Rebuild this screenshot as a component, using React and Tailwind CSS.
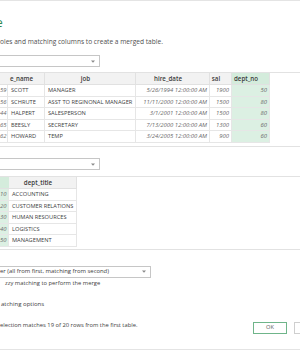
import React from 'react';

const employees = [
  ['59', 'SCOTT', 'MANAGER', '5/26/1994 12:00:00 AM', '1900', '50'],
  ['56', 'SCHRUTE', 'ASST TO REGINONAL MANAGER', '11/11/2000 12:00:00 AM', '1500', '80'],
  ['44', 'HALPERT', 'SALESPERSON', '3/1/2001 12:00:00 AM', '1500', '80'],
  ['65', 'BEESLY', 'SECRETARY', '7/13/2000 12:00:00 AM', '1300', '60'],
  ['62', 'HOWARD', 'TEMP', '3/24/2005 12:00:00 AM', '900', '60'],
];

const departments = [
  ['10', 'ACCOUNTING'],
  ['20', 'CUSTOMER RELATIONS'],
  ['30', 'HUMAN RESOURCES'],
  ['40', 'LOGISTICS'],
  ['50', 'MANAGEMENT'],
];

const Caret = () => (
  <svg width="4" height="3" viewBox="0 0 4 3" className="shrink-0 mr-[4px]">
    <path d="M0 0.5 L4 0.5 L2 2.8 Z" fill="#8a8a8a" />
  </svg>
);

const head = 'h-[12px] leading-[12px] border-r border-b border-[#e1e1e1] text-center pr-[9px] text-[6.2px] font-semibold text-[#3c3c3c] whitespace-nowrap overflow-hidden';
const cell = 'h-[11.5px] leading-[11.5px] border-r border-b border-[#e6e6e6] whitespace-nowrap overflow-hidden';
const txt = `${cell} pl-[3px] text-[5.7px] text-[#404040]`;
const num = `${cell} pr-[2px] text-right italic text-[5.9px] text-[#6a6a6a]`;

const App = () => {
  return (
    <div className="w-[300px] h-[350px] bg-white overflow-hidden font-['Open_Sans',sans-serif] flex flex-col">
      <div className="h-px bg-[#e4e4e4] shrink-0" />

      {/* title + description */}
      <div className="mt-[15px] h-[14px] leading-[14px] text-[12px] text-[#2f8a52] -ml-[4px] shrink-0">e</div>
      <div className="mt-[7px] h-[10px] leading-[10px] text-[6.6px] text-[#505050] whitespace-nowrap shrink-0">
        oles and matching columns to create a merged table.
      </div>

      <div className="mt-[8px] w-[100px] h-[12px] border border-l-0 border-[#c6c6c6] flex items-center justify-end shrink-0">
        <Caret />
      </div>

      {/* first table */}
      <div className="mt-[5px] border-y border-[#e2e2e2] pb-[3.5px] shrink-0">
        <div className="grid grid-cols-[8px_37px_91px_74px_22px_38px] w-[270px]">
          <div className={`${head} bg-[#f2f2f2]`} />
          <div className={`${head} bg-[#f2f2f2]`}>e_name</div>
          <div className={`${head} bg-[#f2f2f2]`}>job</div>
          <div className={`${head} bg-[#f2f2f2]`}>hire_date</div>
          <div className={`${head} bg-[#f2f2f2]`}>sal</div>
          <div className={`${head} bg-[#d4ecdc]`}>dept_no</div>
          {employees.map((r) => (
            <React.Fragment key={r[0]}>
              <div className={num}>{r[0]}</div>
              <div className={txt}>{r[1]}</div>
              <div className={txt}>{r[2]}</div>
              <div className={num}>{r[3]}</div>
              <div className={num}>{r[4]}</div>
              <div className={`${num} bg-[#dcf0e3]`}>{r[5]}</div>
            </React.Fragment>
          ))}
        </div>
      </div>

      <div className="mt-[11px] w-[100px] h-[12px] border border-l-0 border-[#c6c6c6] flex items-center justify-end shrink-0">
        <Caret />
      </div>

      {/* second table */}
      <div className="mt-[6px] border-y border-[#e2e2e2] pb-[2px] shrink-0">
        <div className="grid grid-cols-[9px_68px] w-[77px]">
          <div className={`${head} h-[11.5px] leading-[11.5px] bg-[#d4ecdc]`} />
          <div className={`${head} h-[11.5px] leading-[11.5px] bg-[#f2f2f2]`}>dept_title</div>
          {departments.map((r) => (
            <React.Fragment key={r[0]}>
              <div className={`${num} bg-[#dcf0e3]`}>{r[0]}</div>
              <div className={txt}>{r[1]}</div>
            </React.Fragment>
          ))}
        </div>
      </div>

      <div className="mt-[16px] w-[151px] h-[12px] border border-l-0 border-[#c6c6c6] flex items-center justify-between shrink-0">
        <span className="text-[5.9px] text-[#3a3a3a] whitespace-nowrap">er (all from first, matching from second)</span>
        <Caret />
      </div>

      <div className="mt-[1px] h-[8px] leading-[8px] pl-[5px] text-[5.8px] text-[#404040] whitespace-nowrap shrink-0">
        zzy matching to perform the merge
      </div>
      <div className="mt-[13px] h-[8px] leading-[8px] pl-px text-[6px] text-[#404040] whitespace-nowrap shrink-0">
        atching options
      </div>

      {/* status + buttons */}
      <div className="mt-[13px] flex items-start shrink-0">
        <div className="w-[253px] shrink-0 h-[8px] leading-[8px] text-[5.8px] text-[#404040] whitespace-nowrap">
          election matches 19 of 20 rows from the first table.
        </div>
        <button className="mt-px w-[34px] h-[12px] shrink-0 border border-[#6fb58a] bg-white text-[5.6px] text-[#5a5a5a] leading-none">
          OK
        </button>
        <button className="mt-px ml-[7px] w-[40px] h-[12px] shrink-0 border border-[#cfcfcf] bg-white text-[5.6px] text-[#5a5a5a] leading-none">
          Cancel
        </button>
      </div>

      <div className="mt-[15px] h-px bg-[#e4e4e4] shrink-0" />
    </div>
  );
};

export default App;
